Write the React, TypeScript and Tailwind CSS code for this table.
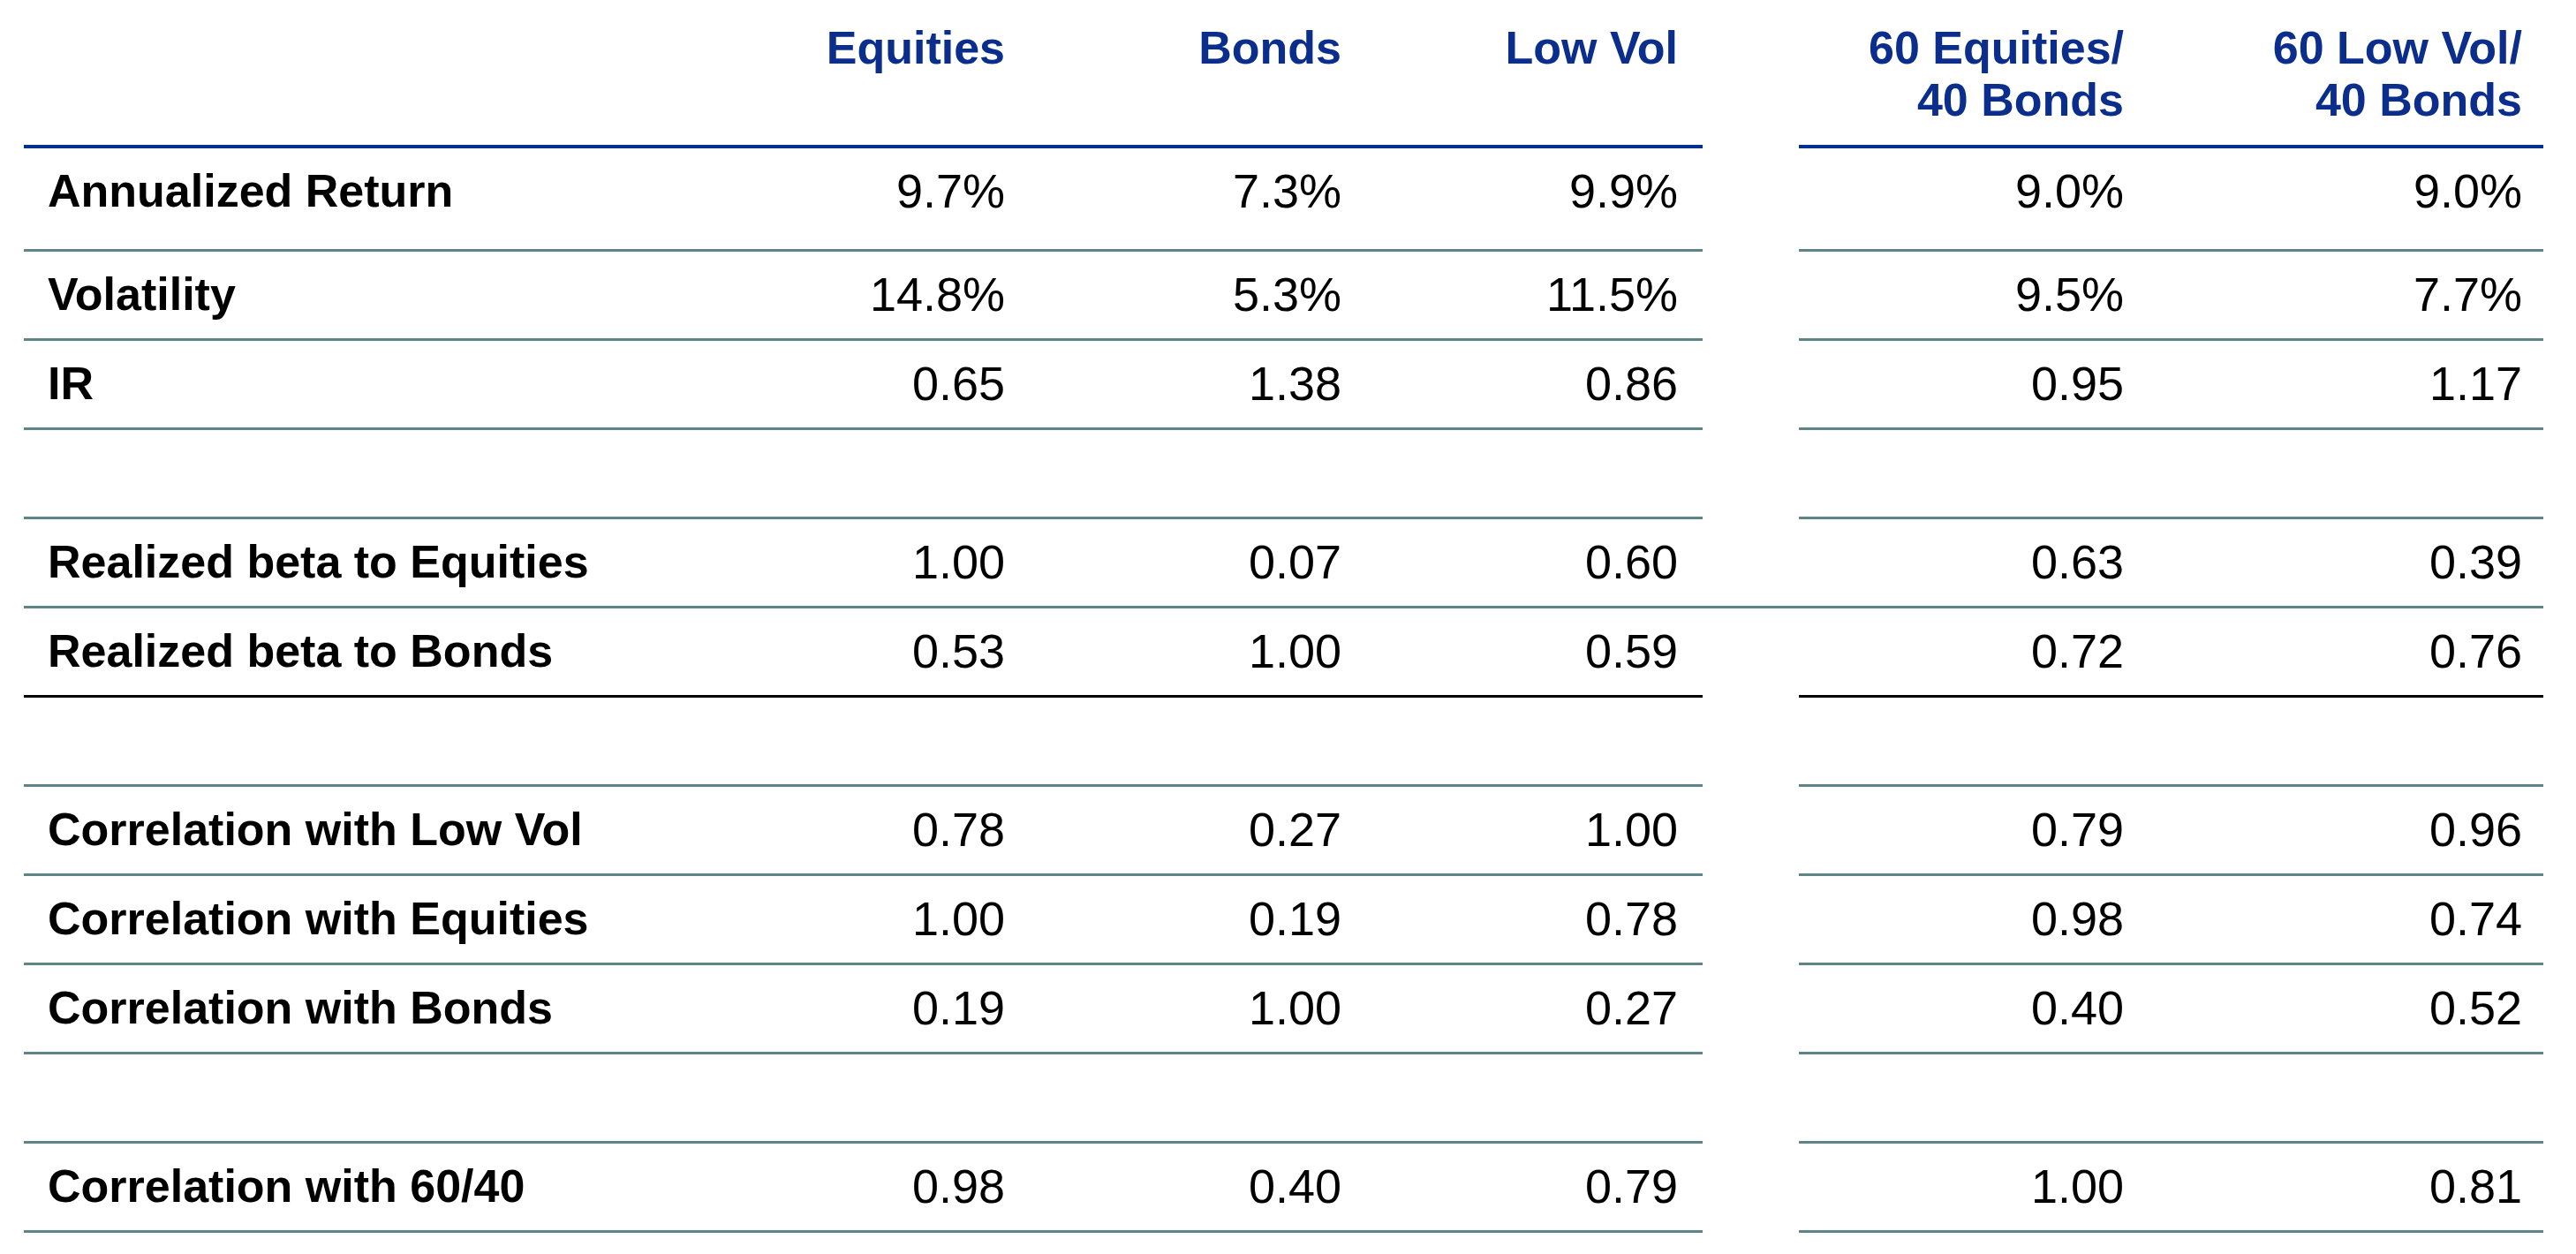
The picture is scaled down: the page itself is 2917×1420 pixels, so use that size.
import React from 'react';

interface StatRow {
  label?: string;
  assets?: string[];
  blends?: string[];
  first?: boolean;
  bridge?: boolean;
  dark?: boolean;
}

const rows: StatRow[] = [
  { label: 'Annualized Return', assets: ['9.7%', '7.3%', '9.9%'], blends: ['9.0%', '9.0%'], first: true },
  { label: 'Volatility', assets: ['14.8%', '5.3%', '11.5%'], blends: ['9.5%', '7.7%'] },
  { label: 'IR', assets: ['0.65', '1.38', '0.86'], blends: ['0.95', '1.17'] },
  {},
  { label: 'Realized beta to Equities', assets: ['1.00', '0.07', '0.60'], blends: ['0.63', '0.39'], bridge: true },
  { label: 'Realized beta to Bonds', assets: ['0.53', '1.00', '0.59'], blends: ['0.72', '0.76'], dark: true },
  {},
  { label: 'Correlation with Low Vol', assets: ['0.78', '0.27', '1.00'], blends: ['0.79', '0.96'] },
  { label: 'Correlation with Equities', assets: ['1.00', '0.19', '0.78'], blends: ['0.98', '0.74'] },
  { label: 'Correlation with Bonds', assets: ['0.19', '1.00', '0.27'], blends: ['0.40', '0.52'] },
  {},
  { label: 'Correlation with 60/40', assets: ['0.98', '0.40', '0.79'], blends: ['1.00', '0.81'] },
];

function HeaderRow() {
  return (
    <div className="flex h-[168px] text-[52px] font-bold leading-[59px] text-[#0b2e8c]">
      <div className="grid w-[1901px] grid-cols-[758px_381px_381px_381px] border-b-4 border-[#00318f] pt-[25px]">
        <div />
        <div className="pr-[28px] text-right">Equities</div>
        <div className="pr-[28px] text-right">Bonds</div>
        <div className="pr-[28px] text-right">Low Vol</div>
      </div>
      <div className="w-[109px]" />
      <div className="grid w-[843px] grid-cols-[392px_451px] border-b-4 border-[#00318f] pt-[25px]">
        <div className="pr-[24px] text-right">
          60 Equities/
          <br />
          40 Bonds
        </div>
        <div className="pr-[24px] text-right">
          60 Low Vol/
          <br />
          40 Bonds
        </div>
      </div>
    </div>
  );
}

function BodyRow({ row }: { row: StatRow }) {
  const height = row.first ? 'h-[117px]' : 'h-[101px]';
  const line = row.dark ? 'border-black' : 'border-[#5e8585]';

  return (
    <div className={`flex ${height} leading-[59px] text-black`}>
      <div className={`grid w-[1901px] grid-cols-[758px_381px_381px_381px] border-b-[3px] ${line} pt-[19px]`}>
        <div className="pl-[27px] text-[52px] font-bold">{row.label}</div>
        {(row.assets ?? ['', '', '']).map((v, i) => (
          <div key={i} className="pr-[28px] text-right text-[54px]">
            {v}
          </div>
        ))}
      </div>
      <div className={`w-[109px] border-b-[3px] ${row.bridge ? 'border-[#5e8585]' : 'border-transparent'}`} />
      <div className={`grid w-[843px] grid-cols-[392px_451px] border-b-[3px] ${line} pt-[19px]`}>
        {(row.blends ?? ['', '']).map((v, i) => (
          <div key={i} className="pr-[24px] text-right text-[54px]">
            {v}
          </div>
        ))}
      </div>
    </div>
  );
}

export default function App() {
  return (
    <div className="min-h-screen w-[2917px] bg-white pl-[27px] font-['Liberation_Sans',Arial,sans-serif]">
      <HeaderRow />
      {rows.map((row, i) => (
        <BodyRow key={i} row={row} />
      ))}
    </div>
  );
}
